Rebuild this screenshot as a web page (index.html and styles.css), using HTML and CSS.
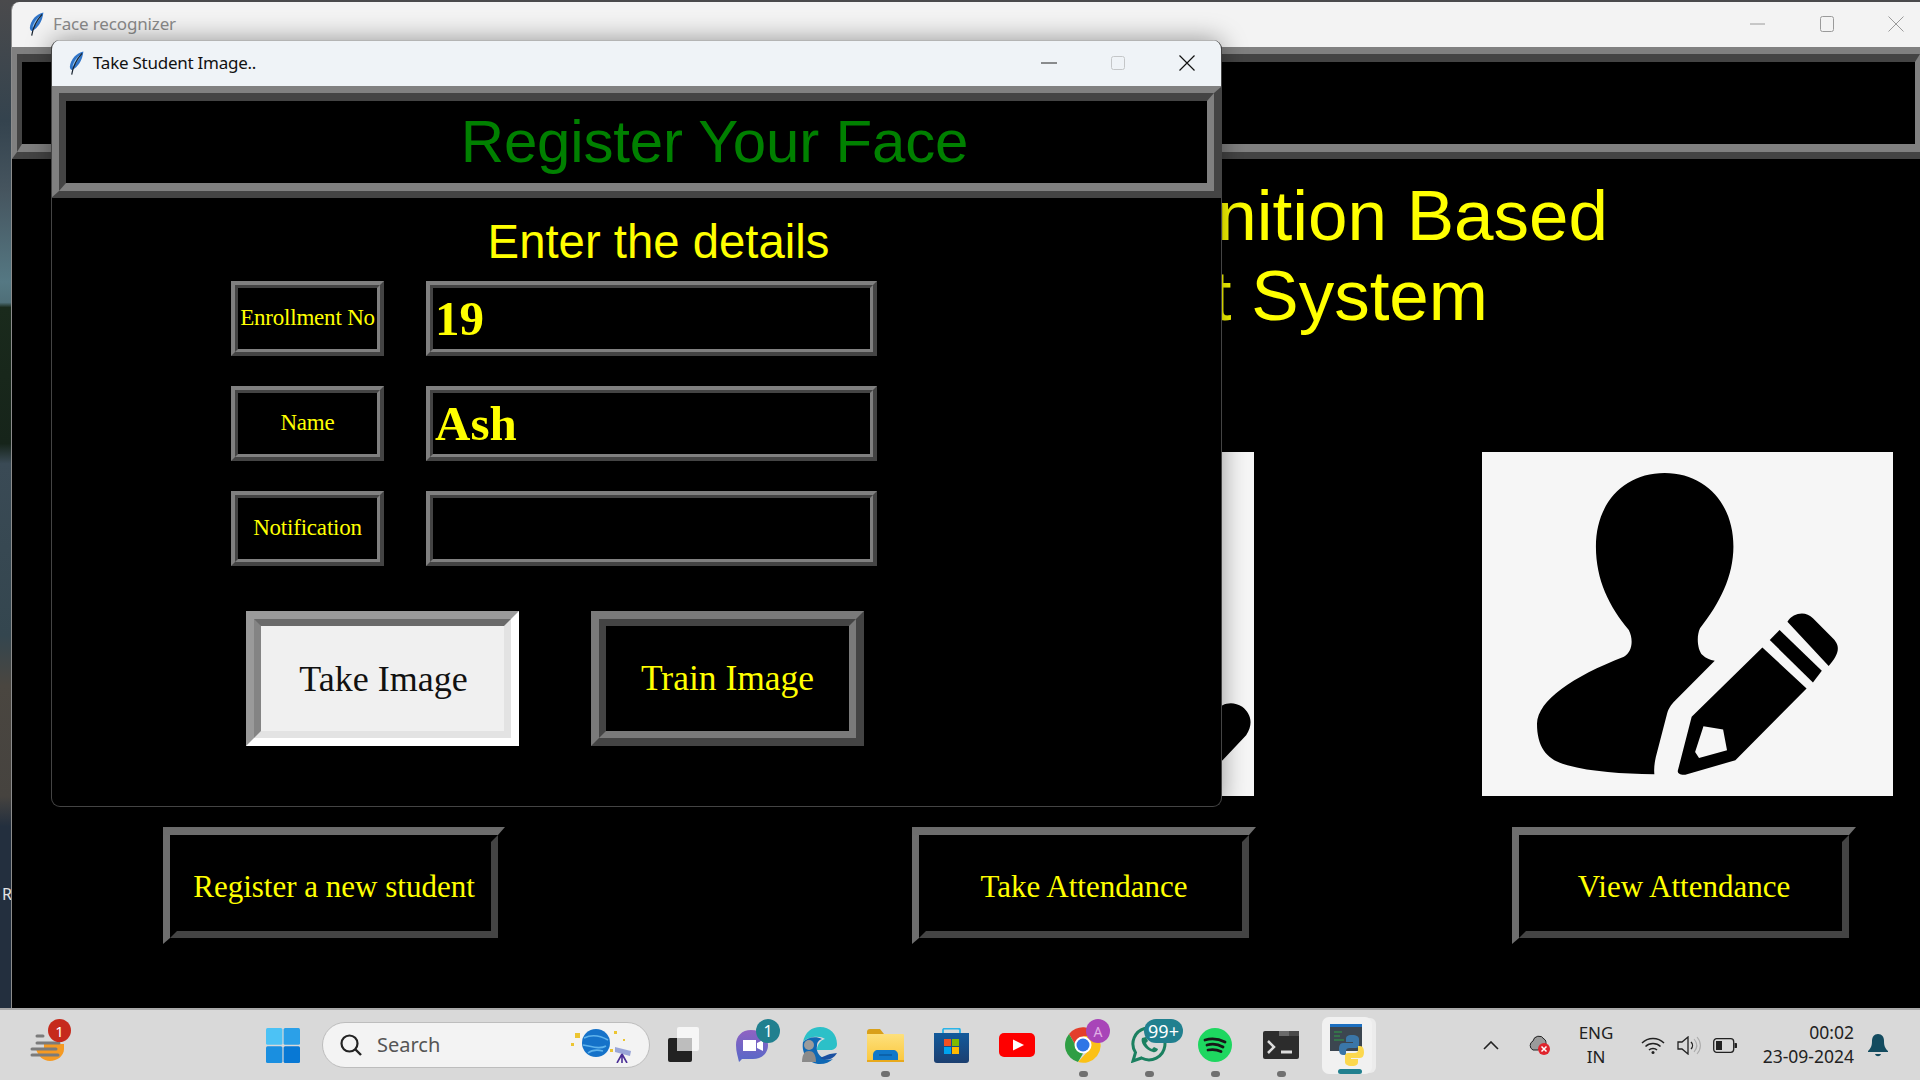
FILE: index.html
```html
<!DOCTYPE html>
<html lang="en">
<head>
    <meta charset="UTF-8">
    <title>Face recognizer</title>
    <link rel="stylesheet" href="styles.css">
</head>
<body>

<svg class="defs" width="0" height="0">
    <defs>
        <linearGradient id="teamsFill" x1="0" y1="0" x2="0" y2="1">
            <stop offset="0" stop-color="#8f62c2"/>
            <stop offset="1" stop-color="#5668c8"/>
        </linearGradient>
        <linearGradient id="folderFill" x1="0" y1="0" x2="0" y2="1">
            <stop offset="0" stop-color="#fde07c"/>
            <stop offset="1" stop-color="#fbc73c"/>
        </linearGradient>
        <linearGradient id="storeFill" x1="0" y1="0" x2="0" y2="1">
            <stop offset="0" stop-color="#125a9c"/>
            <stop offset="1" stop-color="#1c3f70"/>
        </linearGradient>
    </defs>
    <symbol id="feather" viewBox="0 0 16 26">
        <path d="M15.500 0.500C8 2 1.500 9 0.800 17c0 2 1 3.500 2.500 3.500 6-3 11-10 12.200-20z" fill="#2f74c8"/>
        <path d="M13 3.500C8 6.500 4.500 12 3.500 17c4-3 7.500-8 9.500-13.500z" fill="#8cc0f0"/>
        <path d="M14 2.500C8 9 4.500 15 2.800 25.500" stroke="#1a2430" stroke-width="1.300" fill="none"/>
    </symbol>
</svg>

<div class="desktop">
    <span class="desktop-label">R</span>

    <!-- main window -->
    <div class="window main-window">
        <div class="titlebar main-titlebar">
            <svg class="feather"><use href="#feather"/></svg>
            <span class="title-text">Face recognizer</span>
            <div class="controls main-controls">
                <svg class="ctl" viewBox="0 0 16 16"><path d="M0 8h15" stroke="#9a9a9a"/></svg>
                <svg class="ctl" viewBox="0 0 16 16"><rect x="1.500" y="0.500" width="13" height="15" rx="2" fill="none" stroke="#9a9a9a"/></svg>
                <svg class="ctl" viewBox="0 0 16 16"><path d="M0.500 0.500l15 15M15.500 0.500l-15 15" stroke="#9a9a9a"/></svg>
            </div>
        </div>
        <div class="ridge main-banner"><div class="ridge-in"></div></div>
        <h1 class="main-heading">
            <span class="line">Face Recognition Based</span>
            <span class="line second">Attendance Management System</span>
        </h1>
        <div class="image-row">
            <div class="pic">
                <svg viewBox="-625 37 837 1030" preserveAspectRatio="none">
                    <path d="M100 830L148 795C160 786 175 787 188 800C205 820 212 850 196 885L148 960L100 1000Z"/>
                </svg>
            </div>
            <div class="pic">
                <svg viewBox="676 37 837 1030" preserveAspectRatio="none">
                    <path d="M1048 100C1130 100 1188 190 1188 320C1188 410 1160 490 1120 565C1112 590 1115 630 1125 645C1132 655 1140 660 1150 662L1070 780C1060 795 1056 805 1053 820L1030 950C1027 970 1026 985 1027 1002C960 1000 900 995 850 975C810 960 788 925 788 850C790 780 860 710 965 650C982 635 985 600 975 570C935 500 908 420 908 320C908 190 965 100 1048 100Z"/>
                    <path fill-rule="evenodd" d="M1247 622L1337 745L1192 960L1090 1003C1080 1005 1073 998 1075 990L1103 830ZM1127 858L1110 935L1118 953L1175 930L1167 868Z"/>
                    <path d="M1282 570L1368 692L1350 727L1262 600Z"/>
                    <path d="M1298 545C1310 518 1335 512 1350 535L1392 597C1405 618 1405 640 1382 678Z"/>
                </svg>
            </div>
        </div>
        <div class="button-row">
            <div class="flat-btn btn-register"><div class="flat-btn-in">Register a new student</div></div>
            <div class="flat-btn btn-attendance"><div class="flat-btn-in">Take Attendance</div></div>
            <div class="flat-btn btn-view"><div class="flat-btn-in">View Attendance</div></div>
        </div>
    </div>

    <!-- dialog -->
    <div class="window dialog">
        <div class="titlebar dialog-titlebar">
            <svg class="feather"><use href="#feather"/></svg>
            <span class="title-text">Take Student Image..</span>
            <div class="controls dialog-controls">
                <svg class="ctl" viewBox="0 0 16 16"><path d="M0 8h16" stroke="#222"/></svg>
                <svg class="ctl" viewBox="0 0 16 16"><rect x="1.500" y="1.500" width="13" height="13" rx="2" fill="none" stroke="#c4c6c8"/></svg>
                <svg class="ctl" viewBox="0 0 16 16"><path d="M0.500 0.500l15 15M15.500 0.500l-15 15" stroke="#111" stroke-width="1.200"/></svg>
            </div>
        </div>
        <div class="ridge dialog-banner"><div class="ridge-in">Register Your Face</div></div>
        <h2 class="details-title">Enter the details</h2>
        <div class="form">
            <div class="ridge small"><div class="ridge-in field-label">Enrollment No</div></div>
            <div class="ridge small"><div class="ridge-in field-value">19</div></div>
            <div class="ridge small"><div class="ridge-in field-label">Name</div></div>
            <div class="ridge small"><div class="ridge-in field-value">Ash</div></div>
            <div class="ridge small"><div class="ridge-in field-label">Notification</div></div>
            <div class="ridge small"><div class="ridge-in field-value"></div></div>
        </div>
        <div class="dialog-buttons">
            <div class="bevel bevel-light"><div class="bevel-in">Take Image</div></div>
            <div class="bevel bevel-dark"><div class="bevel-in">Train Image</div></div>
        </div>
    </div>
</div>

<!-- taskbar -->
<div class="taskbar">
    <div class="tb-weather">
        <svg viewBox="0 0 36 30" width="36" height="30">
            <path d="M6 17h28c0 7-7 12-14 12S8 24 6 17z" fill="#f59a23"/>
            <path d="M14 12h20v5H14z" fill="#f59a23"/>
            <g stroke="#7b7b7b" stroke-width="3" stroke-linecap="round"><path d="M7 4h6M7 11h22M2 17h24M2 23h26"/></g>
        </svg>
        <span class="badge badge-red">1</span>
    </div>
    <div class="tb-center">
        <div class="tb-cell">
            <svg viewBox="0 0 34 35" width="34" height="35">
                <rect width="16.400" height="16.800" rx="1.500" fill="#4cc2f5"/><rect x="17.600" width="16.400" height="16.800" rx="1.500" fill="#2ba0e8"/>
                <rect y="18.200" width="16.400" height="16.800" rx="1.500" fill="#1a8fe0"/><rect x="17.600" y="18.200" width="16.400" height="16.800" rx="1.500" fill="#0878d4"/>
            </svg>
        </div>
        <div class="search">
            <svg viewBox="0 0 24 24" width="24" height="24"><circle cx="10.500" cy="10.500" r="8" fill="none" stroke="#222" stroke-width="2.200"/><path d="M16 16l6 6" stroke="#222" stroke-width="2.400"/></svg>
            <span class="search-text">Search</span>
            <svg class="search-art" viewBox="0 0 64 36" width="64" height="36">
                <circle cx="25" cy="16" r="14" fill="#1572c9"/>
                <path d="M13 11c8-4 17-2 24 2M12 18c8 1 16 5 23 1M17 26c5-4 11-3 15-2" stroke="#5fb3ec" stroke-width="1.600" fill="none"/>
                <path d="M4 6h5v5H4zM43 4h3v3h-3zM0 16h3v3H0zM52 12h2v2h-2zM39 22h3v3h-3z" fill="#ecc531"/>
                <path d="M44 20l16 4-1 5-15-4z" fill="#9aa6d8"/>
                <path d="M51 27l-5 9M51 27l5 9M51 27v9" stroke="#4a2f96" stroke-width="1.600"/>
            </svg>
        </div>
        <div class="tb-cell">
            <svg class="tv-icon" viewBox="0 0 32 36" width="32" height="36">
                <rect y="11" width="24" height="24" rx="2" fill="#222"/>
                <rect x="9" width="22" height="24" rx="2" fill="#f6f6f6"/>
                <rect x="9" y="11" width="15" height="13" fill="#bdbdbd"/>
            </svg>
        </div>
        <div class="tb-cell">
            <svg viewBox="0 0 34 36" width="34" height="36">
                <path d="M15 3c9 0 17 6 17 15s-7 14-15 14H6l-3 3c-1-5-3-10-3-17C0 9 6 3 15 3z" fill="url(#teamsFill)"/>
                <path d="M7 13h13v11H7zM21 16l6-3v11l-6-3z" fill="#fff"/>
            </svg>
            <span class="badge badge-teal badge-teams">1</span>
        </div>
        <div class="tb-cell">
            <svg viewBox="0 0 38 38" width="38" height="38">
                <path d="M3 16C5 6 12 1 20 1c10 0 17 7 17 17 0 4-3 6-7 6H17c0-6 4-10 8-11-6-4-17-2-22 3z" fill="#2cc0c8"/>
                <path d="M3 16c5-5 13-6 19-3-3 1-5 3-5 7-1 4 1 9 6 12 3 2 7 2 10 1-3 3-8 5-13 5C9 38 1 28 3 16z" fill="#0f68b4"/>
                <path d="M20 32c6 3 13 2 17-5l-7 1c-3 1-6 2-10 4z" fill="#1a50a0"/>
                <circle cx="9" cy="19" r="5" fill="#9b9b9b"/><path d="M2 36c0-8 3-11 7-11s7 3 7 11z" fill="#8a8a8a"/>
            </svg>
        </div>
        <div class="tb-cell">
            <svg viewBox="0 0 37 33" width="37" height="33">
                <path d="M0 3c0-2 1-3 3-3h10l4 5H0z" fill="#d9a01a"/>
                <path d="M0 5h36c1 0 1 1 1 1v27H0z" fill="url(#folderFill)"/>
                <path d="M6 33v-7c0-3 2-5 5-5h15c3 0 5 2 5 5v7z" fill="#1178c9"/>
                <path d="M12 26h13" stroke="#0a5ba0" stroke-width="1.500"/>
                <rect y="31" width="37" height="2" fill="#e8a91c"/>
            </svg>
            <span class="dot"></span>
        </div>
        <div class="tb-cell">
            <svg viewBox="0 0 35 35" width="35" height="35">
                <path d="M9 7V2c0-1 1-1.500 2-1.500h13c1 0 2 .5 2 1.500v5" fill="none" stroke="#2bb4e8" stroke-width="1.800"/>
                <path d="M0 5h35v27c0 2-1 3-3 3H3c-2 0-3-1-3-3z" fill="url(#storeFill)"/>
                <rect x="10" y="11" width="7" height="7" fill="#f25022"/><rect x="18" y="11" width="7" height="7" fill="#7fba00"/>
                <rect x="10" y="19" width="7" height="7" fill="#00a4ef"/><rect x="18" y="19" width="7" height="7" fill="#ffb900"/>
            </svg>
        </div>
        <div class="tb-cell">
            <svg viewBox="0 0 36 24" width="36" height="24">
                <rect width="36" height="24" rx="5" fill="#fe0000"/><path d="M14 6.500L25 12l-11 5.500z" fill="#fff"/>
            </svg>
        </div>
        <div class="tb-cell">
            <svg viewBox="0 0 36 36" width="36" height="36">
                <path d="M18 18L33 9A17.500 17.500 0 0 0 4 7l7 12z" fill="#e33e2b"/>
                <path d="M4 7a17.500 17.500 0 0 0 9 28l7-12-9-4z" fill="#2f9e44"/>
                <path d="M33 9H18l7 13-12 13A17.500 17.500 0 0 0 33 9z" fill="#fbc116"/>
                <circle cx="18" cy="18" r="8.500" fill="#fff"/><circle cx="18" cy="18" r="6.500" fill="#2f75e6"/>
            </svg>
            <span class="badge badge-purple">A</span>
            <span class="dot"></span>
        </div>
        <div class="tb-cell">
            <svg viewBox="0 0 36 36" width="36" height="36">
                <path d="M2 34l2.500-8.500A16 16 0 1 1 10.500 31z" fill="none" stroke="#1b8060" stroke-width="3"/>
                <path d="M11 11c-2 4 3 12 11 14 3 1 5-2 5-3l-4-2-2 2c-3-1-5-4-6-6l2-2-2-4z" fill="#1b8060"/>
            </svg>
            <span class="badge badge-teal badge-wide">99+</span>
            <span class="dot"></span>
        </div>
        <div class="tb-cell">
            <svg viewBox="0 0 34 34" width="34" height="34">
                <circle cx="17" cy="17" r="17" fill="#1ed760"/>
                <path d="M7 12c7-2 14-1 20 2M9 17c5-1.500 11-1 16 2M10 22c5-1 9-.5 13 1.500" stroke="#171717" stroke-width="2.800" stroke-linecap="round" fill="none"/>
            </svg>
            <span class="dot"></span>
        </div>
        <div class="tb-cell">
            <svg viewBox="0 0 36 28" width="36" height="28">
                <rect width="36" height="28" rx="2" fill="#2c2c2c"/>
                <rect x="16" width="10" height="5" fill="#6a6a6a"/><rect x="26" width="10" height="5" fill="#4a4a4a"/>
                <path d="M5 10l6 6-6 6" fill="none" stroke="#ddd" stroke-width="2.500"/><path d="M18 21h11" stroke="#ddd" stroke-width="3"/>
            </svg>
            <span class="dot"></span>
        </div>
        <div class="tb-cell tb-active">
            <svg viewBox="0 0 34 42" width="34" height="42">
                <rect width="32" height="27" fill="#3c4650"/><rect width="32" height="3" fill="#1c6fc0"/>
                <path d="M4 8h8M4 12h6M4 16h10" stroke="#2f9e44"/>
                <path d="M22 11c-5 0-6 2-6 4v3h7v1h-10c-3 0-4 3-4 6s1 6 4 6h3v-4c0-2 1-3 4-3h6c2 0 3-1 3-3v-6c0-2-2-4-7-4z" fill="#3a76a8"/>
                <path d="M22 42c5 0 6-2 6-4v-3h-7v-1h9c3 0 4-3 4-6s-1-6-4-6h-2v4c0 2-1 3-4 3h-6c-2 0-3 1-3 3v6c0 2 2 4 7 4z" fill="#fcd84e"/>
            </svg>
            <span class="active-bar"></span>
        </div>
    </div>
    <div class="tray">
        <svg class="tray-caret" viewBox="0 0 16 9" width="16" height="9"><path d="M1 8l7-7 7 7" fill="none" stroke="#222" stroke-width="1.600"/></svg>
        <svg class="tray-cloud" viewBox="0 0 24 20" width="24" height="20">
            <path d="M6 15a5 5 0 0 1 0-9 6 6 0 0 1 11-2c2 1 2 3 2 5l-8 6z" fill="#9a9a9a" stroke="#222" stroke-width="1"/>
            <circle cx="17" cy="14" r="6" fill="#e0242d"/><path d="M14.500 11.500l5 5M19.500 11.500l-5 5" stroke="#fff" stroke-width="1.500"/>
        </svg>
        <div class="tray-lang">ENG<br>IN</div>
        <svg class="tray-wifi" viewBox="0 0 24 17" width="24" height="17">
            <g fill="none" stroke="#222" stroke-width="1.500"><path d="M1 6c6-6 16-6 22 0M4.500 9.500c4-4 11-4 15 0M8 13c2-2 6-2 8 0"/></g><circle cx="12" cy="15.500" r="1.500" fill="#222"/>
        </svg>
        <svg class="tray-sound" viewBox="0 0 24 19" width="24" height="19">
            <path d="M1 6h4l6-5v17l-6-5H1z" fill="none" stroke="#222" stroke-width="1.300"/>
            <path d="M14 6c2 2 2 5 0 7" fill="none" stroke="#222" stroke-width="1.300"/>
            <path d="M17 3c3.500 4 3.500 9 0 13M20 1c4.500 5 4.500 12 0 17" fill="none" stroke="#aaa" stroke-width="1.100"/>
        </svg>
        <svg class="tray-battery" viewBox="0 0 24 15" width="24" height="15">
            <rect x="0.700" y="0.700" width="20" height="13.600" rx="3" fill="none" stroke="#222" stroke-width="1.300"/>
            <rect x="3" y="3" width="6" height="9" fill="#222"/><path d="M21.500 5h1a1.500 1.500 0 0 1 0 5h-1z" fill="#222"/>
        </svg>
        <div class="tray-clock">00:02<br>23-09-2024</div>
        <svg class="tray-bell" viewBox="0 0 20 23" width="20" height="23">
            <path d="M10 0c4 0 6 3 6 7 0 5 1 7 4 10v1H0v-1c3-3 4-5 4-10 0-4 2-7 6-7z" fill="#134b5f"/><path d="M7 20h6c-1 3-5 3-6 0z" fill="#134b5f"/>
        </svg>
    </div>
</div>

</body>
</html>
```
FILE: styles.css
```css
* {
    box-sizing: border-box;
}
html, body {
    margin: 0;
    height: 100%;
    overflow: hidden;
}
body {
    width: 1920px;
    height: 1080px;
    font-family: "Liberation Serif", serif;
    display: flex;
    flex-direction: column;
}
.defs {
    position: absolute;
}
.desktop {
    position: relative;
    height: 1008px;
    background: linear-gradient(180deg, #4a4a4c 0, #34434e 12%, #46555f 19%, #557883 28%, #4f6f78 30%, #1a2a1c 30.500%, #16241a 44%, #3a4a55 46%, #34464f 63%, #4a4640 68%, #46433f 79%, #232f3e 82%, #232f3e 100%);
    overflow: hidden;
}
.desktop-label {
    position: absolute;
    left: 2px;
    top: 883px;
    color: #e4e4e4;
    font: 16px "Noto Sans", sans-serif;
}
.window {
    position: absolute;
    background: #000;
    overflow: hidden;
}
.main-window {
    left: 11px;
    top: 2px;
    right: 0;
    bottom: 0;
    border-left: 1px solid #8c8c8c;
    border-radius: 8px 0 0 0;
}
.dialog {
    left: 51px;
    top: 40px;
    width: 1171px;
    height: 767px;
    border-radius: 9px;
    border: 1px solid #444;
    border-top: 0;
    box-shadow: 0 0 26px rgba(0, 0, 0, 0.4);
}

/* title bars */
.titlebar {
    display: flex;
    align-items: center;
    font-family: "Noto Sans", sans-serif;
}
.main-titlebar {
    height: 45px;
    background: #f3f3f3;
    color: #8a8a8a;
    font-size: 17px;
    letter-spacing: -0.150px;
    padding-left: 17px;
    padding-bottom: 2px;
}
.dialog-titlebar {
    height: 46px;
    background: #eff3f7;
    color: #111;
    font-size: 17px;
    letter-spacing: -0.250px;
    padding-left: 17px;
    padding-bottom: 2px;
    border-top: 1px solid #b4b4b4;
}
.feather {
    width: 15px;
    height: 24px;
    margin-right: 9px;
}
.controls {
    margin-left: auto;
    display: flex;
    letter-spacing: 0;
}
.ctl {
    width: 16px;
    height: 16px;
}
.main-controls {
    gap: 53px;
    padding-right: 16px;
}
.dialog-controls {
    gap: 53px;
    padding-right: 26px;
}

/* tk style ridge: two nested mitred borders */
.ridge {
    border-style: solid;
    border-width: 8px;
    border-color: #808080 #444 #444 #808080;
}
.ridge-in {
    height: 100%;
    border-style: solid;
    border-width: 8px;
    border-color: #444 #808080 #808080 #444;
    background: #000;
}
.main-banner {
    height: 112px;
    margin-right: -5px;
    border-width: 7px 5px;
}
.main-banner .ridge-in {
    border-width: 8px 5px;
}
.dialog-banner {
    height: 112px;
    border-width: 7px 8px;
    margin-left: -1px;
    margin-right: -1px;
}
.dialog-banner .ridge-in {
    border-width: 8px 7px;
    color: #008000;
    font: 60px/82px "Liberation Sans", sans-serif;
    letter-spacing: -0.150px;
    text-align: center;
    padding-left: 156px;
}
.main-heading {
    margin: 17px 0 0;
    padding-right: 312px;
    font: 400 71px/80px "Liberation Sans", sans-serif;
    color: #ff0;
    text-align: right;
    white-space: nowrap;
}
.line {
    display: block;
}
.second {
    padding-right: 120px;
}
.image-row {
    display: flex;
    gap: 228px;
    margin-top: 116px;
    padding-left: 831px;
}
.pic {
    width: 411px;
    height: 344px;
    background: #f6f6f6;
}
.pic svg {
    display: block;
    width: 100%;
    height: 100%;
}
.button-row {
    display: flex;
    margin-top: 31px;
    padding-left: 151px;
}
.flat-btn {
    width: 344px;
    height: 117px;
    border-style: solid;
    border-width: 8px 7px 6px;
    border-color: #6e6e6e transparent transparent #6e6e6e;
}
.flat-btn-in {
    height: 100%;
    border: 7px solid;
    border-color: #000 #444 #444 #000;
    color: #ff0;
    font-size: 31px;
    display: flex;
    align-items: center;
    justify-content: center;
}
.btn-register {
    width: 342px;
}
.btn-attendance {
    margin-left: 407px;
}
.btn-view {
    margin-left: 256px;
}

/* dialog body */
.details-title {
    margin: 17px 0 0;
    font: 400 47.300px/54px "Liberation Sans", sans-serif;
    color: #ff0;
    text-align: center;
    padding-left: 44px;
}
.form {
    display: grid;
    grid-template-columns: 153px 451px;
    grid-auto-rows: 75px;
    column-gap: 42px;
    row-gap: 30px;
    margin-top: 12px;
    margin-left: 179px;
}
.small {
    border-width: 4px;
}
.small .ridge-in {
    border-width: 3px;
    color: #ff0;
    display: flex;
    align-items: center;
}
.small .field-label {
    font-size: 23px;
    justify-content: center;
    letter-spacing: -0.200px;
    padding-bottom: 2px;
}
.small .field-value {
    font-size: 49px;
    font-weight: 700;
    padding-left: 2px;
}
.dialog-buttons {
    display: flex;
    gap: 72px;
    margin: 45px 0 0 194px;
}
.bevel {
    width: 273px;
    height: 135px;
    border-style: solid;
    border-width: 8px;
}
.bevel-in {
    height: 100%;
    border-style: solid;
    border-width: 7px;
    display: flex;
    align-items: center;
    justify-content: center;
    font-size: 36px;
}
.bevel-light {
    border-color: #9a9a9a #fff #fff #9a9a9a;
}
.bevel-light .bevel-in {
    border-color: #6a6a6a #e3e3e3 #e3e3e3 #848484;
    background: #f0f0f0;
    color: #111;
    padding-left: 2px;
}
.bevel-dark {
    border-color: #7a7a7a #444 #444 #7a7a7a;
}
.bevel-dark .bevel-in {
    border-color: #444 #7a7a7a #7a7a7a #444;
    background: #000;
    color: #ff0;
    font-size: 35.500px;
    padding-bottom: 1px;
}

/* taskbar */
.taskbar {
    position: relative;
    height: 72px;
    display: flex;
    align-items: center;
    background: #d9d9d9;
    border-top: 2px solid #a9a9a9;
    font-family: "Noto Sans", sans-serif;
}
.tb-weather {
    position: relative;
    margin-left: 30px;
    margin-top: 4px;
    width: 36px;
    height: 30px;
}
.tb-center {
    display: flex;
    align-items: center;
    margin-left: 184px;
}
.tb-cell {
    position: relative;
    flex: none;
    width: 66px;
    height: 40px;
    display: flex;
    align-items: center;
    justify-content: center;
}
.tv-icon {
    margin-right: 6px;
}
.search {
    flex: none;
    width: 328px;
    height: 46px;
    margin: 0 4px 0 6px;
    padding-left: 16px;
    padding-bottom: 1px;
    display: flex;
    align-items: center;
    background: #f3f3f3;
    border: 1px solid #bdbdbd;
    border-radius: 23px;
}
.search-text {
    margin-left: 14px;
    font-size: 20px;
    color: #555;
}
.search-art {
    margin-left: auto;
    margin-right: 14px;
}
.badge {
    position: absolute;
    display: flex;
    align-items: center;
    justify-content: center;
    color: #fff;
    border-radius: 12px;
    font-size: 15px;
}
.badge-red {
    left: 18px;
    top: -13px;
    width: 23px;
    height: 23px;
    background: #c62a1c;
}
.badge-teal {
    background: #21808f;
}
.badge-teams {
    left: 36px;
    top: -6px;
    width: 24px;
    height: 24px;
    font-size: 16px;
}
.badge-wide {
    left: 28px;
    top: -6px;
    width: 39px;
    height: 24px;
    font-size: 18px;
}
.badge-purple {
    left: 36px;
    top: -6px;
    width: 24px;
    height: 24px;
    background: #a845b8;
    color: #e0b0e6;
    font-size: 14px;
}
.dot {
    position: absolute;
    left: 29px;
    bottom: -12px;
    width: 9px;
    height: 6px;
    border-radius: 3px;
    background: #707070;
}
.tb-active {
    height: 57px;
    width: 50px;
    margin-left: 8px;
    background: #f1f1f1;
    border-radius: 7px;
    box-shadow: 5px 0 0 -1px #ececec;
}
.active-bar {
    position: absolute;
    left: 16px;
    bottom: 0;
    width: 24px;
    height: 5px;
    border-radius: 3px;
    background: #21808f;
}
.tray {
    display: flex;
    align-items: center;
    position: absolute;
    left: 1483px;
    top: 0;
    bottom: 0;
    color: #222;
}
.tray-cloud {
    margin-left: 28px;
}
.tray-lang {
    width: 60px;
    margin-left: 15px;
    font-size: 17px;
    line-height: 24px;
    text-align: center;
}
.tray-wifi {
    margin-left: 15px;
}
.tray-sound {
    margin-left: 12px;
}
.tray-battery {
    margin-left: 12px;
}
.tray-clock {
    width: 105px;
    margin-left: 12px;
    padding-bottom: 2px;
    font-size: 17.500px;
    line-height: 24px;
    text-align: right;
}
.tray-bell {
    margin-left: 14px;
}
```
